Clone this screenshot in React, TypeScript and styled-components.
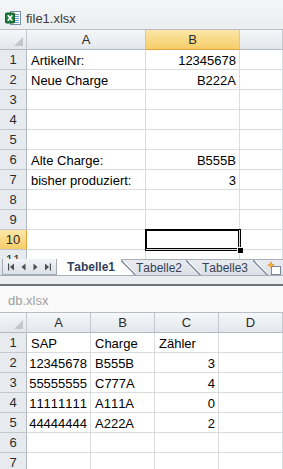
import React from "react";
import styled, { createGlobalStyle } from "styled-components";

const GlobalStyle = createGlobalStyle`
  html, body {
    margin: 0;
    padding: 0;
    background: #fff;
    overflow: hidden;
  }
  body {
    font-family: "Liberation Sans", Arial, sans-serif;
    font-kerning: none;
    font-variant-numeric: tabular-nums;
  }
`;

const Page = styled.div`
  width: 283px;
  height: 469px;
  display: flex;
  flex-direction: column;
  overflow: hidden;
`;

const Workbook = styled.section`
  display: flex;
  flex-direction: column;
  flex-shrink: 0;
`;

const TitleBar = styled.div<{ $active: boolean; $height: number }>`
  height: ${({ $height }) => $height}px;
  box-sizing: border-box;
  display: flex;
  align-items: flex-end;
  gap: 5px;
  padding: 0 0 ${({ $active }) => ($active ? 3 : 4)}px ${({ $active }) => ($active ? 5 : 8)}px;
  font-size: 13px;
  color: ${({ $active }) => ($active ? "#3a3a3a" : "#a0a0a0")};
  background: ${({ $active }) =>
    $active ? "linear-gradient(#f4f5f6, #eceef1)" : "#fafafa"};
  border-bottom: 1px solid #b9bec5;
`;

const Grid = styled.div<{ $cols: string; $height: number }>`
  display: grid;
  grid-template-columns: ${({ $cols }) => $cols};
  grid-auto-rows: 20px;
  height: ${({ $height }) => $height}px;
  overflow: hidden;
  background: #fff;
`;

const ColHeader = styled.div<{ $active?: boolean }>`
  box-sizing: border-box;
  display: flex;
  align-items: center;
  justify-content: center;
  font-size: 13px;
  color: #2b2b2b;
  background: ${({ $active }) =>
    $active
      ? "linear-gradient(#fbe6a8, #f6cd68)"
      : "linear-gradient(#f5f7f9, #e3e7ec)"};
  border-right: 1px solid #c3c8cf;
  border-bottom: 1px solid ${({ $active }) => ($active ? "#e2a33a" : "#b3b9c1")};
`;

const Corner = styled(ColHeader)`
  position: relative;
  &::after {
    content: "";
    position: absolute;
    right: 3px;
    bottom: 3px;
    width: 9px;
    height: 9px;
    background: #c3c8cf;
    clip-path: polygon(100% 0, 100% 100%, 0 100%);
  }
`;

const RowHeader = styled.div<{ $active?: boolean }>`
  box-sizing: border-box;
  display: flex;
  align-items: center;
  justify-content: center;
  font-size: 13px;
  color: #2b2b2b;
  background: ${({ $active }) =>
    $active ? "linear-gradient(#fbe6a8, #f6cd68)" : "#e7ebf0"};
  border-right: 1px solid ${({ $active }) => ($active ? "#e2a33a" : "#b3b9c1")};
  border-bottom: 1px solid #c3c8cf;
`;

const Cell = styled.div<{ $align?: "left" | "right"; $selected?: boolean }>`
  box-sizing: border-box;
  position: relative;
  display: flex;
  align-items: center;
  justify-content: ${({ $align }) => ($align === "right" ? "flex-end" : "flex-start")};
  padding: 1px 3px 0 4px;
  font-size: 13px;
  color: #000;
  white-space: nowrap;
  border-right: 1px solid #d9dbde;
  border-bottom: 1px solid #d9dbde;
  ${({ $selected }) =>
    $selected &&
    `
    z-index: 1;
    box-shadow: 0 0 0 1px #000, inset 0 0 0 1px #000;
    &::after {
      content: "";
      position: absolute;
      right: -4px;
      bottom: -4px;
      width: 5px;
      height: 5px;
      background: #000;
      border: 1px solid #fff;
      border-right: none;
      border-bottom: none;
    }
  `}
`;

const TabBar = styled.div`
  height: 16px;
  display: flex;
  background: linear-gradient(#e9ecf0, #dde1e7);
  border-bottom: 1px solid #a8afb9;
`;

const NavBox = styled.div`
  width: 61px;
  margin-left: 2px;
  box-sizing: border-box;
  display: flex;
  align-items: center;
  justify-content: space-around;
  padding: 0 3px;
  border: 1px solid #a3abb6;
  border-top: none;
  background: linear-gradient(#f1f3f6, #dde2e8);
`;

const Tab = styled.div<{ $active?: boolean; $afterActive?: boolean; $width: number; $pad: number }>`
  position: relative;
  width: ${({ $width }) => $width}px;
  box-sizing: border-box;
  flex-shrink: 0;
  display: flex;
  align-items: center;
  overflow: hidden;
  padding-left: ${({ $pad }) => $pad}px;
  font-size: 12px;
  font-weight: ${({ $active }) => ($active ? 700 : 400)};
  color: #33415a;
  background: ${({ $active }) => ($active ? "#fff" : "transparent")};
  border-top: ${({ $active }) => ($active ? "none" : "1px solid #a8afb9")};
  &::before {
    content: "";
    display: ${({ $active }) => ($active ? "none" : "block")};
    position: absolute;
    left: 0;
    top: 0;
    width: 15px;
    height: 16px;
    background: linear-gradient(
      to top right,
      ${({ $afterActive }) => ($afterActive ? "#fff" : "transparent")} 46%,
      #8c97a6 47%,
      #8c97a6 53%,
      #f6f7f9 54%,
      #f6f7f9 57%,
      transparent 60%
    );
  }
`;

const Strip = styled.div`
  height: 8px;
  background: #eceef1;
  border-bottom: 2px solid #6f7277;
`;

const ExcelIcon = () => (
  <svg width="16" height="16" viewBox="0 0 16 16">
    <rect x="5.5" y="1.5" width="10" height="13" fill="#fff" stroke="#7a8fa8" />
    <path d="M9 4.5h5M9 6.5h5M9 8.5h5M9 10.5h5M9 12.5h5" stroke="#6c9cd0" />
    <rect x="0.5" y="3" width="9" height="10" rx="1" fill="#1d7b3a" stroke="#135e2a" />
    <path d="M2.8 5.2l4.4 5.6M7.2 5.2l-4.4 5.6" stroke="#fff" strokeWidth="1.6" />
  </svg>
);

const NavIcon = ({ dir, bar }: { dir: "left" | "right"; bar?: boolean }) => (
  <svg width="7" height="8" viewBox="0 0 7 8">
    {dir === "left" ? (
      <>
        <path d={bar ? "M6 0.5v7L2 4z" : "M5.5 0.5v7L1.5 4z"} fill="#4a4f57" />
        {bar && <rect x="0" y="0.5" width="1.2" height="7" fill="#4a4f57" />}
      </>
    ) : (
      <>
        <path d={bar ? "M1 0.5v7L5 4z" : "M1.5 0.5v7L5.5 4z"} fill="#4a4f57" />
        {bar && <rect x="5.8" y="0.5" width="1.2" height="7" fill="#4a4f57" />}
      </>
    )}
  </svg>
);

const NewSheetIcon = () => (
  <svg width="14" height="14" viewBox="0 0 14 14">
    <rect x="4.5" y="5.5" width="9" height="8" fill="#fff" stroke="#7d8896" />
    <path
      d="M4 0.8l0.9 2.3 2.3 0.9-2.3 0.9-0.9 2.3-0.9-2.3-2.3-0.9 2.3-0.9z"
      fill="#f6b13c"
      stroke="#e08a1e"
      strokeWidth="0.6"
    />
  </svg>
);

type Row = { n: number; cells: { text: string; right?: boolean }[] };

const topRows: Row[] = [
  { n: 1, cells: [{ text: "ArtikelNr:" }, { text: "12345678", right: true }] },
  { n: 2, cells: [{ text: "Neue Charge" }, { text: "B222A", right: true }] },
  { n: 3, cells: [] },
  { n: 4, cells: [] },
  { n: 5, cells: [] },
  { n: 6, cells: [{ text: "Alte Charge:" }, { text: "B555B", right: true }] },
  { n: 7, cells: [{ text: "bisher produziert:" }, { text: "3", right: true }] },
  { n: 8, cells: [] },
  { n: 9, cells: [] },
  { n: 10, cells: [] },
  { n: 11, cells: [] },
];

const dbRows: Row[] = [
  { n: 1, cells: [{ text: "SAP" }, { text: "Charge" }, { text: "Zähler" }] },
  { n: 2, cells: [{ text: "12345678", right: true }, { text: "B555B" }, { text: "3", right: true }] },
  { n: 3, cells: [{ text: "55555555", right: true }, { text: "C777A" }, { text: "4", right: true }] },
  { n: 4, cells: [{ text: "11111111", right: true }, { text: "A111A" }, { text: "0", right: true }] },
  { n: 5, cells: [{ text: "44444444", right: true }, { text: "A222A" }, { text: "2", right: true }] },
  { n: 6, cells: [] },
  { n: 7, cells: [] },
];

const Sheet = ({
  cols,
  letters,
  rows,
  height,
  activeCol,
  activeRow,
}: {
  cols: string;
  letters: string[];
  rows: Row[];
  height: number;
  activeCol?: number;
  activeRow?: number;
}) => (
  <Grid $cols={cols} $height={height}>
    <Corner />
    {letters.map((l, i) => (
      <ColHeader key={l + i} $active={i === activeCol}>
        {l}
      </ColHeader>
    ))}
    {rows.map((row) => (
      <React.Fragment key={row.n}>
        <RowHeader $active={row.n === activeRow}>{row.n}</RowHeader>
        {letters.map((_, i) => {
          const cell = row.cells[i];
          return (
            <Cell
              key={i}
              $align={cell?.right ? "right" : "left"}
              $selected={row.n === activeRow && i === activeCol}
            >
              {cell?.text}
            </Cell>
          );
        })}
      </React.Fragment>
    ))}
  </Grid>
);

export default function App() {
  return (
    <Page>
      <GlobalStyle />
      <Workbook>
        <TitleBar $active $height={30}>
          <ExcelIcon />
          <span>file1.xlsx</span>
        </TitleBar>
        <Sheet
          cols="27px 119px 94px 1fr"
          letters={["A", "B", ""]}
          rows={topRows}
          height={229}
          activeCol={1}
          activeRow={10}
        />
        <TabBar>
          <NavBox>
            <NavIcon dir="left" bar />
            <NavIcon dir="left" />
            <NavIcon dir="right" />
            <NavIcon dir="right" bar />
          </NavBox>
          <Tab $active $width={64} $pad={10}>
            Tabelle1
          </Tab>
          <Tab $afterActive $width={65} $pad={15}>
            Tabelle2
          </Tab>
          <Tab $width={67} $pad={16}>
            Tabelle3
          </Tab>
          <Tab $width={30} $pad={14}>
            <NewSheetIcon />
          </Tab>
        </TabBar>
        <Strip />
      </Workbook>
      <Workbook>
        <TitleBar $active={false} $height={27}>
          <span>db.xlsx</span>
        </TitleBar>
        <Sheet
          cols="27px 64px 64px 64px 1fr"
          letters={["A", "B", "C", "D"]}
          rows={dbRows}
          height={160}
        />
      </Workbook>
    </Page>
  );
}
